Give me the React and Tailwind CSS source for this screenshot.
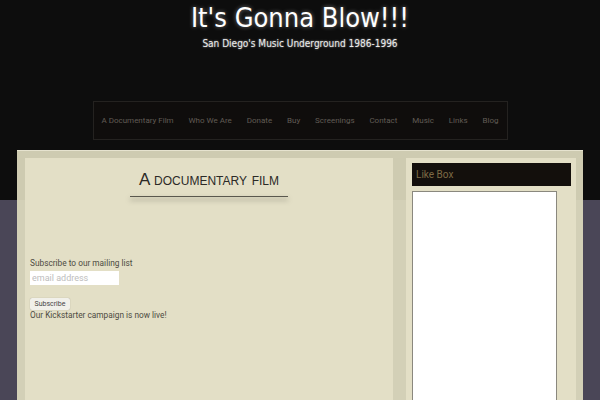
const NAV = ["A Documentary Film", "Who We Are", "Donate", "Buy", "Screenings", "Contact", "Music", "Links", "Blog"];

function Header() {
  return (
    <div className="flex flex-col items-center">
      <h1 className="mt-[2px] text-[27px] leading-[32px] text-white [font-family:'DejaVu_Sans_Condensed','DejaVu_Sans',sans-serif] [text-shadow:0_0_4px_rgba(255,255,255,0.45)]">
        It's Gonna Blow!!!
      </h1>
      <p className="mt-[3px] text-[10px] leading-[14px] text-[#ececec] [font-family:'DejaVu_Sans_Condensed','DejaVu_Sans',sans-serif] [text-shadow:0_0_2px_rgba(255,255,255,0.6)]">
        San Diego's Music Underground 1986-1996
      </p>
      <nav className="mt-[50px] flex h-[39px] w-[415px] items-center justify-between border border-[#242220] bg-[#0f0d0c] px-[8px] text-[8px] text-[#615c55] [font-family:Roboto,sans-serif]">
        {NAV.map((n) => (
          <span key={n}>{n}</span>
        ))}
      </nav>
    </div>
  );
}

function Main() {
  return (
    <div className="flex h-[300px] flex-1 flex-col bg-[#e3dfc6] px-[5px]">
      <div className="mx-auto mt-[10px] w-[158px]">
        <h2 className="text-center text-[17px] leading-[24px] text-[#2b2a26] [font-family:'Liberation_Sans',Arial,sans-serif] [font-variant:small-caps]">
          A documentary film
        </h2>
        <div className="mt-[4px] h-px bg-[#5a584e] shadow-[0_3px_5px_rgba(0,0,0,0.5)]" />
      </div>
      <div className="mt-[61px] text-[8.3px] leading-[11px] text-[#4d4b42] [font-family:Roboto,sans-serif]">
        <p>Subscribe to our mailing list</p>
        <input
          placeholder="email address"
          className="mt-[2px] h-[14px] w-[89px] bg-white px-[2px] text-[9px] outline-none placeholder:text-[#bdbdbd]"
        />
        <div className="mt-[13px]">
          <button className="h-[12px] w-[40px] rounded-[2px] bg-[#f1f0ea] text-[7px] leading-[12px] text-[#444] shadow-[0_0_1px_rgba(0,0,0,0.35)]">
            Subscribe
          </button>
        </div>
        <p className="mt-0">Our Kickstarter campaign is now live!</p>
      </div>
    </div>
  );
}

function Sidebar() {
  return (
    <div className="flex h-[300px] w-[170px] flex-col bg-[#e3dfc6] pt-[5px] pl-[6px] pr-[5px]">
      <div className="flex h-[23px] items-center bg-[#130f0c] px-[4px] text-[10px] text-[#7d6a45] [font-family:Roboto,sans-serif]">
        Like Box
      </div>
      <div className="mt-[5px] w-[145px] flex-1 border border-[#8a887e] bg-white" />
    </div>
  );
}

export default function App() {
  return (
    <div className="h-[400px] w-[600px] overflow-hidden bg-[linear-gradient(to_bottom,#0d0d0d_200px,#4a4657_200px)]">
      <Header />
      <div className="mx-[17px] mt-[10px] flex gap-[13px] border-t border-[#e6e3cf] bg-[rgba(222,218,190,0.93)] pt-[7px] pl-[8px] pr-[7px]">
        <Main />
        <Sidebar />
      </div>
    </div>
  );
}
